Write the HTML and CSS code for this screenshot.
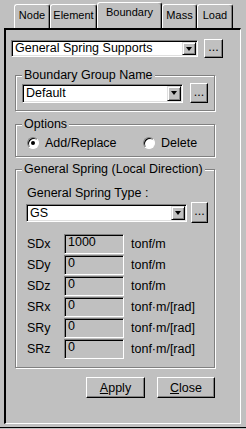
FILE: index.html
```html
<!DOCTYPE html>
<html lang="en">
<head>
  <meta charset="UTF-8" />
  <title>Boundary</title>
  <link rel="stylesheet" href="styles.css">
</head>
<body>
  <div class="window">
    <div class="tabs">
      <div class="tab t-node">Node</div>
      <div class="tab t-element">Element</div>
      <div class="tab t-boundary active">Boundary</div>
      <div class="tab t-mass">Mass</div>
      <div class="tab t-load">Load</div>
    </div>

    <div class="panel">
      <div class="row top-row">
        <div class="combo combo-type">
          <span class="val">General Spring Supports</span>
          <span class="drop"><i class="arrow"></i></span>
        </div>
        <button class="dots">...</button>
      </div>

      <fieldset class="group g-name">
        <legend>Boundary Group Name</legend>
        <div class="row">
          <div class="combo combo-name">
            <span class="val">Default</span>
            <span class="drop"><i class="arrow"></i></span>
          </div>
          <button class="dots dots-name">...</button>
        </div>
      </fieldset>

      <fieldset class="group g-opt">
        <legend>Options</legend>
        <div class="radios">
          <label class="radio first"><span class="dot checked"></span>Add/Replace</label>
          <label class="radio"><span class="dot"></span>Delete</label>
        </div>
      </fieldset>

      <fieldset class="group g-spring">
        <legend>General Spring (Local Direction)</legend>
        <div class="type-label">General Spring Type :</div>
        <div class="row gs-row">
          <div class="combo combo-gs">
            <span class="val">GS</span>
            <span class="drop"><i class="arrow"></i></span>
          </div>
          <button class="dots dots-gs">...</button>
        </div>
        <div class="springs">
          <span class="lbl">SDx</span><span class="box">1000</span><span class="unit">tonf/m</span>
          <span class="lbl">SDy</span><span class="box">0</span><span class="unit">tonf/m</span>
          <span class="lbl">SDz</span><span class="box">0</span><span class="unit">tonf/m</span>
          <span class="lbl">SRx</span><span class="box">0</span><span class="unit">tonf&middot;m/[rad]</span>
          <span class="lbl">SRy</span><span class="box">0</span><span class="unit">tonf&middot;m/[rad]</span>
          <span class="lbl">SRz</span><span class="box">0</span><span class="unit">tonf&middot;m/[rad]</span>
        </div>
      </fieldset>

      <div class="actions">
        <button class="btn btn-apply"><u>A</u>pply</button>
        <button class="btn btn-close"><u>C</u>lose</button>
      </div>
    </div>
  </div>
</body>
</html>
```

FILE: styles.css
```css
body {
  margin: 0;
  background: #c0c0c0;
  color: #000;
  font-family: "Liberation Sans", Arial, sans-serif;
  font-size: 12.5px;
}

.window {
  width: 246px;
  height: 428px;
  box-sizing: border-box;
  border-bottom: 1px solid #000;
}

/* tab strip */
.tabs {
  display: flex;
  align-items: flex-end;
  height: 28px;
  box-sizing: border-box;
  padding: 2px 0 0 14px;
  font-size: 11px;
}

.tab {
  height: 24px;
  box-sizing: border-box;
  padding-top: 4px;
  text-align: center;
  line-height: 13px;
  border-top: 1px solid #fff;
  border-left: 1px solid #fff;
  border-right: 1px solid #000;
  border-radius: 3px 3px 0 0;
  box-shadow: inset -1px 0 0 #808080;
}

.tab.active {
  height: 26px;
  padding-top: 3px;
}

.t-node { width: 36px; }
.t-element { width: 47px; }
.t-boundary { width: 65px; }
.t-mass { width: 35px; }
.t-load { width: 36px; }

/* main pane */
.panel {
  margin-left: 4px;
  width: 237px;
  height: 396px;
  box-sizing: border-box;
  border-top: 2px solid #000;
  border-left: 2px solid #000;
  border-right: 1px solid #fff;
  border-bottom: 1px solid #fff;
  padding: 9px 0 0 5px;
}

.row {
  display: flex;
  align-items: center;
}

.top-row {
  height: 19px;
}

/* combo box */
.combo {
  display: flex;
  box-sizing: border-box;
  background: #fff;
  padding: 1px;
  border: 1px solid;
  border-color: #808080 #fff #fff #808080;
  box-shadow: inset 1px 1px 0 #000, inset -1px -1px 0 #dfdfdf;
}

.combo .val {
  flex: 1;
  padding-left: 2px;
  white-space: nowrap;
  overflow: hidden;
}

.combo .drop {
  width: 14px;
  box-sizing: border-box;
  background: #c0c0c0;
  border: 1px solid;
  border-color: #dfdfdf #000 #000 #dfdfdf;
  box-shadow: inset 1px 1px 0 #fff, inset -1px -1px 0 #808080;
  display: flex;
  align-items: center;
  justify-content: center;
}

.arrow {
  width: 0;
  height: 0;
  border-top: 4px solid #000;
  border-left: 3.5px solid transparent;
  border-right: 3.5px solid transparent;
}

.combo-type {
  width: 187px;
  height: 17px;
  line-height: 13px;
}

.combo-name {
  width: 161px;
  height: 19px;
  line-height: 15px;
}

.combo-gs {
  width: 161px;
  height: 18px;
  line-height: 14px;
  margin-left: 4px;
}

/* "..." buttons */
.dots {
  font: inherit;
  width: 19px;
  height: 19px;
  margin-left: 6px;
  padding: 0 0 2px;
  box-sizing: border-box;
  background: #c0c0c0;
  border: 1px solid;
  border-color: #fff #000 #000 #fff;
  box-shadow: inset -1px -1px 0 #808080;
  line-height: 15px;
}

.dots-name {
  width: 18px;
  height: 20px;
  margin-left: 7px;
}

.dots-gs {
  width: 17px;
  height: 21px;
  margin-left: 4px;
}

/* group boxes */
.group {
  width: 200px;
  box-sizing: border-box;
  min-width: 0;
  margin: 0 0 0 4px;
  padding: 1px 6px 7px;
  border: 1px solid #808080;
  box-shadow: 1px 1px 0 #fff, inset 1px 1px 0 #fff;
}

.group legend {
  padding: 0 2px;
  line-height: 14px;
  background: #c0c0c0;
}

.g-name {
  margin-top: 10px;
}

.g-opt {
  margin-top: 6px;
  padding-top: 5px;
  padding-bottom: 6px;
}

.g-spring {
  margin-top: 5px;
  padding-top: 10px;
  padding-bottom: 8px;
}

/* radios */
.radios {
  display: flex;
  margin-left: 5px;
  line-height: 14px;
}

.radio {
  display: flex;
  align-items: center;
}

.radio.first {
  width: 116px;
}

.dot {
  width: 12px;
  height: 12px;
  box-sizing: border-box;
  margin-right: 6px;
  border-radius: 50%;
  background: #fff;
  border: 1px solid;
  border-color: #808080 #fff #fff #808080;
  box-shadow: inset 1px 1px 0 #000;
  display: flex;
  align-items: center;
  justify-content: center;
}

.dot.checked::after {
  content: "";
  width: 4px;
  height: 4px;
  border-radius: 50%;
  background: #000;
}

/* spring table */
.type-label {
  margin-left: 5px;
  line-height: 14px;
}

.gs-row {
  margin-top: 2px;
}

.springs {
  display: grid;
  grid-template-columns: 30px 60px auto;
  grid-auto-rows: 20px;
  column-gap: 7px;
  row-gap: 1px;
  align-items: center;
  margin: 11px 0 0 5px;
}

.springs .box {
  height: 20px;
  box-sizing: border-box;
  padding: 1px 0 0 3px;
  line-height: 13px;
  border: 1px solid;
  border-color: #808080 #fff #fff #808080;
  box-shadow: inset 1px 1px 0 #000;
}

.springs .unit {
  white-space: nowrap;
}

/* bottom buttons */
.actions {
  display: flex;
  justify-content: flex-end;
  gap: 12px;
  width: 204px;
  margin-top: 9px;
}

.btn {
  font: inherit;
  height: 21px;
  padding: 0;
  box-sizing: border-box;
  background: #c0c0c0;
  border: 1px solid;
  border-color: #fff #000 #000 #fff;
  box-shadow: inset -1px -1px 0 #808080;
}

.btn-apply { width: 59px; }
.btn-close { width: 58px; }
```
